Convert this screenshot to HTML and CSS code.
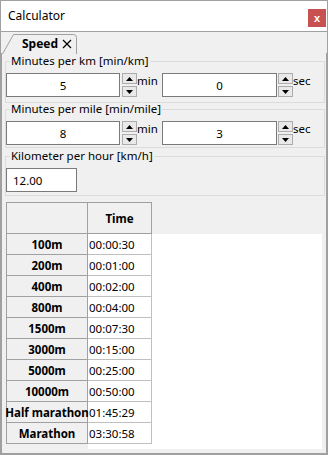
FILE: index.html
```html
<!DOCTYPE html>
<html lang="en">
<head>
    <meta charset="UTF-8">
    <title>Calculator</title>
    <link rel="stylesheet" href="styles.css">
</head>
<body>
    <div class="window">
        <div class="titlebar">
            <span class="title">Calculator</span>
            <button class="close-btn">x</button>
        </div>

        <div class="tabs">
            <div class="tab">
                <svg class="tab-shape" width="75" height="20" viewBox="0 0 75 20">
                    <path d="M0.5 20 L11.5 0.5 H71.5 Q74.5 0.5 74.5 3.5 V20" fill="#f0f0f0" stroke="#a0a0a0"/>
                </svg>
                <span class="tab-label">Speed</span>
                <svg class="tab-close" width="10" height="10" viewBox="0 0 10 10">
                    <path d="M1 1 L9 9 M9 1 L1 9" stroke="#000" stroke-width="1.2"/>
                </svg>
            </div>
        </div>

        <div class="pane">
            <fieldset class="group">
                <legend>Minutes per km [min/km]</legend>
                <div class="row">
                    <input class="field" value="5">
                    <div class="spin">
                        <span class="spin-btn"><svg width="7" height="4" viewBox="0 0 7 4"><path d="M0 4 L3.5 0 L7 4 Z"/></svg></span>
                        <span class="spin-btn"><svg width="7" height="4" viewBox="0 0 7 4"><path d="M0 0 L3.5 4 L7 0 Z"/></svg></span>
                    </div>
                    <span class="unit">min</span>
                    <input class="field wide" value="0">
                    <div class="spin">
                        <span class="spin-btn"><svg width="7" height="4" viewBox="0 0 7 4"><path d="M0 4 L3.5 0 L7 4 Z"/></svg></span>
                        <span class="spin-btn"><svg width="7" height="4" viewBox="0 0 7 4"><path d="M0 0 L3.5 4 L7 0 Z"/></svg></span>
                    </div>
                    <span class="unit">sec</span>
                </div>
            </fieldset>

            <fieldset class="group tight">
                <legend>Minutes per mile [min/mile]</legend>
                <div class="row">
                    <input class="field" value="8">
                    <div class="spin">
                        <span class="spin-btn"><svg width="7" height="4" viewBox="0 0 7 4"><path d="M0 4 L3.5 0 L7 4 Z"/></svg></span>
                        <span class="spin-btn"><svg width="7" height="4" viewBox="0 0 7 4"><path d="M0 0 L3.5 4 L7 0 Z"/></svg></span>
                    </div>
                    <span class="unit">min</span>
                    <input class="field wide" value="3">
                    <div class="spin">
                        <span class="spin-btn"><svg width="7" height="4" viewBox="0 0 7 4"><path d="M0 4 L3.5 0 L7 4 Z"/></svg></span>
                        <span class="spin-btn"><svg width="7" height="4" viewBox="0 0 7 4"><path d="M0 0 L3.5 4 L7 0 Z"/></svg></span>
                    </div>
                    <span class="unit">sec</span>
                </div>
            </fieldset>

            <fieldset class="group last">
                <legend>Kilometer per hour [km/h]</legend>
                <div class="row">
                    <input class="field kmh" value="12.00">
                </div>
            </fieldset>

            <div class="table-view">
                <div class="corner"></div>
                <div class="col-head">Time</div>
                <div class="head-fill"></div>

                <div class="row-head">100m</div><div class="cell">00:00:30</div>
                <div class="row-head">200m</div><div class="cell">00:01:00</div>
                <div class="row-head">400m</div><div class="cell">00:02:00</div>
                <div class="row-head">800m</div><div class="cell">00:04:00</div>
                <div class="row-head">1500m</div><div class="cell">00:07:30</div>
                <div class="row-head">3000m</div><div class="cell">00:15:00</div>
                <div class="row-head">5000m</div><div class="cell">00:25:00</div>
                <div class="row-head">10000m</div><div class="cell">00:50:00</div>
                <div class="row-head">Half marathon</div><div class="cell">01:45:29</div>
                <div class="row-head">Marathon</div><div class="cell">03:30:58</div>

                <div class="head-rest"></div>
            </div>
        </div>
    </div>
</body>
</html>
```

FILE: styles.css
```css
body {
    margin: 0;
    font-family: "Noto Sans", "Open Sans", sans-serif;
    font-size: 11.5px;
    color: #000;
    background-color: #fff;
}
.window {
    width: 328px;
    height: 455px;
    box-sizing: border-box;
    border: 1px solid #a0a0a0;
    display: flex;
    flex-direction: column;
    overflow: hidden;
}
.titlebar {
    height: 30px;
    flex: none;
    display: flex;
    justify-content: space-between;
    align-items: flex-start;
    background-color: #fff;
    border-bottom: 1px solid #a0a0a0;
}
.title {
    margin: 7px 0 0 7px;
    font-size: 12px;
    line-height: 16px;
}
.close-btn {
    width: 18px;
    height: 18px;
    margin: 8px 1px 0 0;
    padding: 0;
    border: none;
    background-color: #c75050;
    color: #fff;
    font-family: "Liberation Sans", sans-serif;
    font-size: 11px;
    font-weight: bold;
    line-height: 16px;
}
.tabs {
    height: 21px;
    flex: none;
    padding: 2px 0 0 1px;
    box-sizing: border-box;
    background-color: #f0f0f0;
    display: flex;
    position: relative;
    z-index: 1;
}
.tab {
    position: relative;
    width: 75px;
    height: 20px;
    flex: none;
    display: flex;
    align-items: center;
}
.tab-shape {
    position: absolute;
    left: 0;
    top: 0;
}
.tab-label {
    position: relative;
    margin-left: 20px;
    font-size: 12px;
    font-weight: bold;
    line-height: 14px;
}
.tab-close {
    position: relative;
    margin-left: 4px;
}
.pane {
    flex: 1;
    background-color: #f0f0f0;
    border: 1px solid #a0a0a0;
    margin-top: -1px;
    padding: 2px 1px 4px 3px;
    display: flex;
    flex-direction: column;
    min-height: 0;
}
.group {
    margin: 0;
    padding: 6px 0 5px 0;
    border: 1px solid #dcdcdc;
    min-width: 0;
}
.group.tight {
    padding-bottom: 2px;
}
.group.last {
    margin-top: 2px;
    padding-bottom: 3px;
}
.group legend {
    margin-left: 4px;
    padding: 0 1px;
    line-height: 12px;
    font-size: 11.5px;
}
.row {
    display: flex;
    align-items: flex-start;
}
.field {
    width: 114px;
    height: 24px;
    box-sizing: border-box;
    margin: 0;
    border: 1px solid #7a7a7a;
    background-color: #fff;
    font-family: inherit;
    font-size: 11.5px;
    text-align: center;
    padding: 0;
    outline: none;
}
.field.wide {
    width: 115px;
}
.field.kmh {
    width: 71px;
    text-align: left;
    padding-left: 6px;
}
.spin {
    width: 15px;
    height: 24px;
    margin-left: 2px;
    display: flex;
    flex-direction: column;
    justify-content: space-between;
    flex: none;
}
.field.wide + .spin {
    margin-left: 1px;
}
.spin-btn {
    height: 11px;
    box-sizing: border-box;
    border: 1px solid #acacac;
    background-color: #e9e9e9;
    display: flex;
    align-items: center;
    justify-content: center;
}
.unit {
    width: 25px;
    margin-top: 1px;
    line-height: 14px;
}
.table-view {
    margin: 6px 3px 0 1px;
    flex: 1;
    background-color: #fff;
    display: grid;
    grid-template-columns: 82px 64px 1fr;
    grid-template-rows: 32px repeat(10, 21px) 1fr;
}
.corner,
.col-head,
.row-head {
    box-sizing: border-box;
    background-color: #f0f0f0;
    border-right: 1px solid #a0a0a0;
    border-bottom: 1px solid #a0a0a0;
    display: flex;
    align-items: center;
    justify-content: center;
    font-weight: bold;
    white-space: nowrap;
}
.corner,
.col-head {
    border-top: 1px solid #a0a0a0;
}
.corner,
.row-head {
    grid-column: 1;
    border-left: 1px solid #a0a0a0;
}
.head-fill {
    background-color: #f0f0f0;
}
.head-rest {
    grid-column: 1;
    background-color: #f0f0f0;
}
.cell {
    grid-column: 2;
    box-sizing: border-box;
    border-right: 1px solid #c0c0c0;
    border-bottom: 1px solid #c0c0c0;
    padding-left: 1px;
    display: flex;
    align-items: center;
    white-space: nowrap;
}
```
